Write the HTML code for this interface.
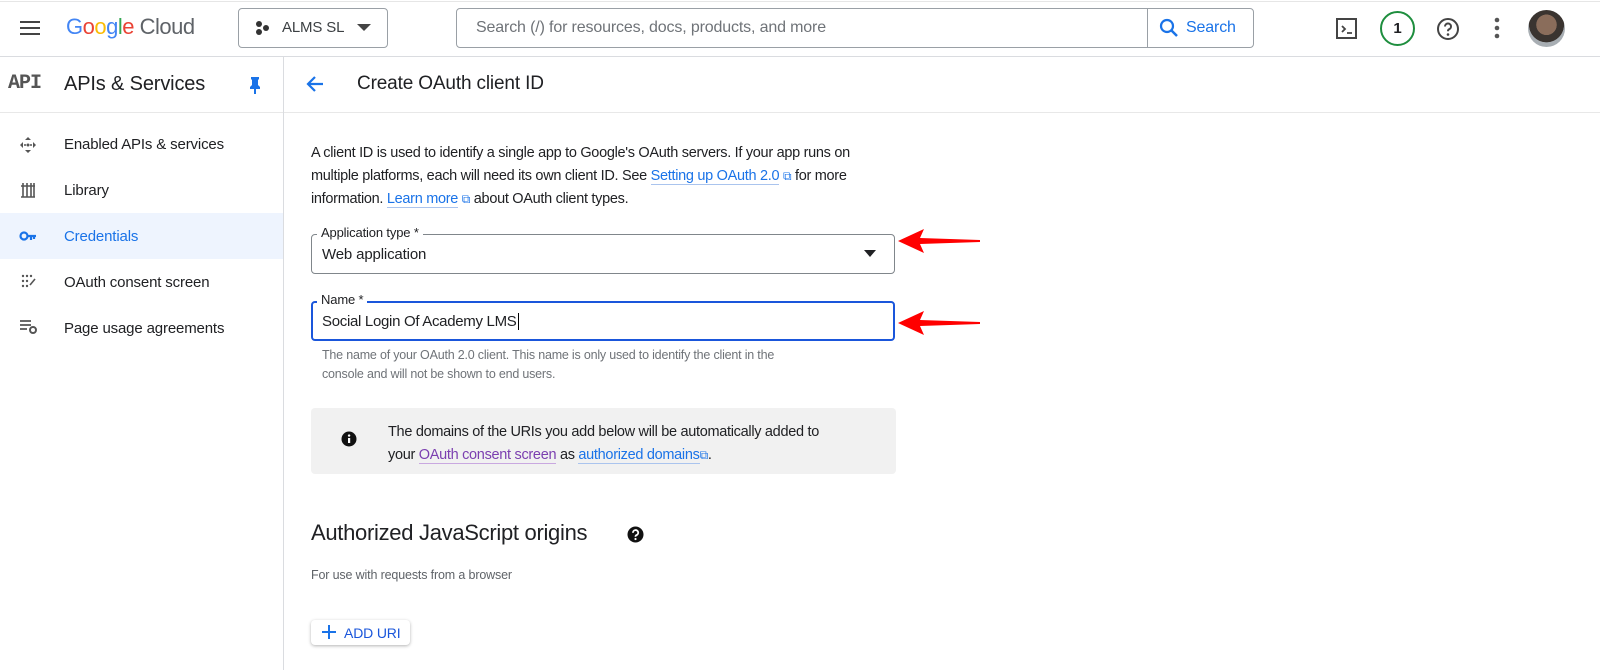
<!DOCTYPE html>
<html><head><meta charset="utf-8"><style>
*{box-sizing:border-box;margin:0;padding:0}
body{width:1600px;height:670px;overflow:hidden;background:#fff;font-family:"Liberation Sans",Arial,sans-serif;color:#202124;position:relative;letter-spacing:-0.15px}
.a{position:absolute}
a{color:#1a73e8;text-decoration:none;border-bottom:1px solid #aac4ee}
</style></head><body>
<div class="a" style="left:0;top:1px;width:1600px;height:1px;background:#e6e6e6"></div>
<div class="a" style="left:0;top:56px;width:1600px;height:1px;background:#dadce0"></div>
<div class="a" style="left:20px;top:21px;width:20px;height:2px;background:#444"></div>
<div class="a" style="left:20px;top:27px;width:20px;height:2px;background:#444"></div>
<div class="a" style="left:20px;top:33px;width:20px;height:2px;background:#444"></div>
<div class="a" style="left:66px;top:14px;font-size:22px;letter-spacing:-0.5px"><span style="color:#4285f4">G</span><span style="color:#ea4335">o</span><span style="color:#fbbc05">o</span><span style="color:#4285f4">g</span><span style="color:#34a853">l</span><span style="color:#ea4335">e</span><span style="color:#5f6368"> Cloud</span></div>
<div class="a" style="left:238px;top:8px;width:150px;height:40px;border:1px solid #9aa0a6;border-radius:4px"></div>
<svg class="a" style="left:254px;top:20px" width="16" height="16"><circle cx="5" cy="4" r="3" fill="#333"/><circle cx="5" cy="12" r="3" fill="#333"/><circle cx="12" cy="8" r="3" fill="#333"/></svg>
<div class="a" style="left:282px;top:19px;font-size:15px;color:#3c4043">ALMS SL</div>
<svg class="a" style="left:357px;top:24px" width="14" height="8"><path d="M0 0h14L7 7z" fill="#444"/></svg>
<div class="a" style="left:456px;top:8px;width:798px;height:40px;border:1px solid #9aa0a6;border-radius:4px;background:#fff"></div>
<div class="a" style="left:1147px;top:9px;width:1px;height:38px;background:#9aa0a6"></div>
<div class="a" style="left:476px;top:19px;font-size:16px;color:#6f7378">Search (/) for resources, docs, products, and more</div>
<svg class="a" style="left:1159px;top:18px" width="20" height="20"><circle cx="8" cy="8" r="6" stroke="#1a73e8" stroke-width="2.2" fill="none"/><path d="M12.5 12.5L18 18" stroke="#1a73e8" stroke-width="2.5"/></svg>
<div class="a" style="left:1186px;top:19px;font-size:16px;color:#1a73e8">Search</div>
<svg class="a" style="left:1336px;top:18px" width="22" height="22"><rect x="1" y="1" width="19" height="19" fill="none" stroke="#444" stroke-width="2"/><path d="M6 8l3 3-3 3M11 15h5" stroke="#444" stroke-width="1.8" fill="none"/></svg>
<div class="a" style="left:1380px;top:11px;width:35px;height:35px;border:2px solid #1e8e3e;border-radius:50%;text-align:center;line-height:31px;font-size:15px;font-weight:bold;color:#202124">1</div>
<svg class="a" style="left:1436px;top:17px" width="24" height="24"><circle cx="12" cy="12" r="10" fill="none" stroke="#444" stroke-width="2"/><path d="M9 9.5a3 3 0 1 1 4 2.8c-.8.4-1 1-1 2" fill="none" stroke="#444" stroke-width="2"/><circle cx="12" cy="17.5" r="1.3" fill="#444"/></svg>
<svg class="a" style="left:1493px;top:17px" width="8" height="22"><circle cx="4" cy="3" r="2.3" fill="#555"/><circle cx="4" cy="11" r="2.3" fill="#555"/><circle cx="4" cy="19" r="2.3" fill="#555"/></svg>
<div class="a" style="left:1528px;top:10px;width:37px;height:37px;border-radius:50%;background:radial-gradient(circle at 50% 40%,#8a6d5b 0 35%,#3a3430 36% 60%,#a8aeb3 61%)"></div>
<div class="a" style="left:283px;top:57px;width:1px;height:613px;background:#dadce0"></div>
<div class="a" style="left:8px;top:72px;font-family:'Liberation Mono',monospace;font-weight:bold;font-size:20px;color:#555;letter-spacing:-1px">API</div>
<div class="a" style="left:64px;top:73px;font-size:20px;color:#202124">APIs &amp; Services</div>
<svg class="a" style="left:249px;top:76px" width="12" height="18"><path d="M2 1h8v2l-1 1v5l2 2v2H7v5H5v-5H1v-2l2-2V4L2 3z" fill="#1a73e8"/></svg>
<div class="a" style="left:0;top:112px;width:283px;height:1px;background:#e8e8e8"></div>
<svg class="a" style="left:19px;top:136px" width="18" height="18"><path d="M9 1l3 3H6zM9 17l3-3H6zM1 9l3-3v6zM17 9l-3-3v6z" fill="#555"/><circle cx="9" cy="9" r="1.5" fill="#555"/><circle cx="6" cy="9" r="1" fill="#555"/><circle cx="12" cy="9" r="1" fill="#555"/></svg>
<div class="a" style="left:64px;top:136px;font-size:15px">Enabled APIs &amp; services</div>
<svg class="a" style="left:20px;top:182px" width="16" height="16"><path d="M1 4h14M1 15h14M3 1v14M7 1v14M11 1v14M14 1v14" stroke="#555" stroke-width="1.6"/></svg>
<div class="a" style="left:64px;top:182px;font-size:15px">Library</div>
<div class="a" style="left:0;top:213px;width:283px;height:46px;background:#e8f0fe;opacity:.75"></div>
<svg class="a" style="left:19px;top:230px" width="18" height="12"><circle cx="5" cy="6" r="3.5" stroke="#1a73e8" stroke-width="2.2" fill="none"/><path d="M8 6h9M12 6v4M15 6v3" stroke="#1a73e8" stroke-width="2.2"/></svg>
<div class="a" style="left:64px;top:228px;font-size:15px;color:#1a73e8">Credentials</div>
<svg class="a" style="left:21px;top:274px" width="16" height="14"><g fill="#555"><circle cx="2" cy="2" r="1.2"/><circle cx="6" cy="2" r="1.2"/><circle cx="10" cy="2" r="1.2"/><circle cx="2" cy="7" r="1.2"/><circle cx="6" cy="7" r="1.2"/><circle cx="2" cy="12" r="1.2"/><circle cx="6" cy="12" r="1.2"/></g><path d="M9 11l5-6" stroke="#555" stroke-width="1.6"/></svg>
<div class="a" style="left:64px;top:274px;font-size:15px">OAuth consent screen</div>
<svg class="a" style="left:19px;top:319px" width="20" height="16"><path d="M1 2h11M1 6h11M1 10h7" stroke="#555" stroke-width="1.7"/><circle cx="14" cy="11" r="3" fill="none" stroke="#555" stroke-width="2"/></svg>
<div class="a" style="left:64px;top:320px;font-size:15px">Page usage agreements</div>
<div class="a" style="left:284px;top:112px;width:1316px;height:1px;background:#e8e8e8"></div>
<svg class="a" style="left:305px;top:74px" width="20" height="20"><path d="M18 10H3M10 3l-7 7 7 7" stroke="#1a73e8" stroke-width="2.2" fill="none"/></svg>
<div class="a" style="left:357px;top:73px;font-size:19px;color:#202124">Create OAuth client ID</div>
<div class="a" style="left:311px;top:142px;width:590px;font-size:14.5px;line-height:23px;color:#202124;letter-spacing:-0.3px">A client ID is used to identify a single app to Google's OAuth servers. If your app runs on multiple platforms, each will need its own client ID. See <a>Setting up OAuth 2.0</a> <span style="color:#1a73e8;font-size:12px">⧉</span> for more information. <a>Learn more</a> <span style="color:#1a73e8;font-size:12px">⧉</span> about OAuth client types.</div>
<div class="a" style="left:311px;top:234px;width:584px;height:40px;border:1px solid #80868b;border-radius:4px"></div>
<div class="a" style="left:317px;top:225px;padding:0 4px;background:#fff;font-size:13px;color:#202124">Application type *</div>
<div class="a" style="left:322px;top:246px;font-size:15px">Web application</div>
<svg class="a" style="left:864px;top:250px" width="12" height="7"><path d="M0 0h12L6 7z" fill="#202124"/></svg>
<div class="a" style="left:311px;top:301px;width:584px;height:40px;border:2px solid #1a56db;border-radius:4px"></div>
<div class="a" style="left:317px;top:292px;padding:0 4px;background:#fff;font-size:13px;color:#202124">Name *</div>
<div class="a" style="left:322px;top:313px;font-size:15px;letter-spacing:-0.3px">Social Login Of Academy LMS<span style="border-left:1px solid #000;margin-left:1px"></span></div>
<div class="a" style="left:322px;top:346px;width:480px;font-size:12.5px;line-height:19px;color:#6f7378;letter-spacing:-0.2px">The name of your OAuth 2.0 client. This name is only used to identify the client in the console and will not be shown to end users.</div>
<svg class="a" style="left:898px;top:226px" width="86" height="30"><path d="M0 15L26 3l-4 9 60 2v2l-60 2 4 9z" fill="#f00"/></svg>
<svg class="a" style="left:898px;top:308px" width="86" height="30"><path d="M0 15L26 3l-4 9 60 2v2l-60 2 4 9z" fill="#f00"/></svg>
<div class="a" style="left:311px;top:408px;width:585px;height:66px;background:#f1f1f1;border-radius:4px"></div>
<svg class="a" style="left:341px;top:431px" width="16" height="16"><circle cx="8" cy="8" r="7.5" fill="#111"/><rect x="7" y="7" width="2.2" height="5" fill="#fff"/><circle cx="8.1" cy="4.6" r="1.2" fill="#fff"/></svg>
<div class="a" style="left:388px;top:421px;width:455px;font-size:14.5px;line-height:23px;letter-spacing:-0.3px">The domains of the URIs you add below will be automatically added to your <a style="color:#7b3fb0;border-color:#c9a8e0">OAuth consent screen</a> as <a>authorized domains</a><span style="color:#1a73e8;font-size:12px">⧉</span>.</div>
<div class="a" style="left:311px;top:520px;font-size:22px;color:#202124;letter-spacing:-0.3px">Authorized JavaScript origins</div>
<svg class="a" style="left:627px;top:526px" width="17" height="17"><circle cx="8.5" cy="8.5" r="8" fill="#111"/><path d="M6 6.8a2.6 2.6 0 1 1 3.5 2.3c-.7.3-1 .8-1 1.6" stroke="#fff" stroke-width="1.8" fill="none"/><circle cx="8.5" cy="13" r="1.1" fill="#fff"/></svg>
<div class="a" style="left:311px;top:568px;font-size:12.5px;color:#5f6368">For use with requests from a browser</div>
<div class="a" style="left:311px;top:620px;width:99px;height:25px;border-radius:4px;box-shadow:0 1px 3px rgba(0,0,0,.3);background:#fff"></div>
<svg class="a" style="left:322px;top:625px" width="14" height="14"><path d="M7 0v14M0 7h14" stroke="#1a73e8" stroke-width="2"/></svg>
<div class="a" style="left:344px;top:625px;font-size:14px;color:#1a56db">ADD URI</div>
</body></html>
